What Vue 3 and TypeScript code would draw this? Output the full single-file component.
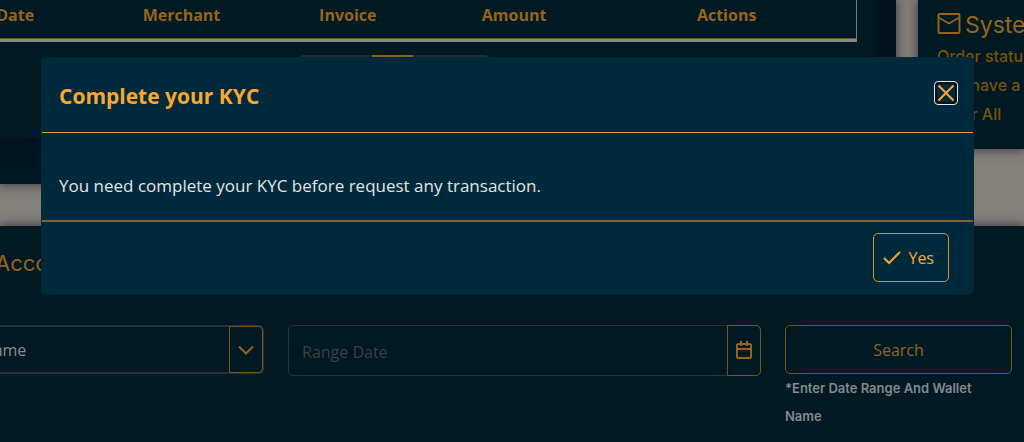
<script setup lang="ts">
import { ref } from 'vue'

const columns = ['Date', 'Merchant', 'Invoice', 'Amount', 'Actions']
const wallet = ref('name')
const range = ref('')
const open = ref(true)
</script>

<template>
  <div class="page">
    <main class="board">
      <div class="top">
        <section class="panel orders">
          <div class="orders-body">
            <table class="table">
              <thead>
                <tr>
                  <th v-for="c in columns" :key="c" scope="col">{{ c }}</th>
                </tr>
              </thead>
            </table>
            <nav class="pager" aria-label="Pages">
              <button type="button" class="pg" aria-label="Previous"></button>
              <button type="button" class="pg on" aria-label="Current"></button>
              <button type="button" class="pg" aria-label="Next"></button>
            </nav>
          </div>
        </section>
        <section class="panel notices">
          <h2 class="notice-title">
            <svg class="mail" viewBox="0 0 24 22" aria-hidden="true">
              <rect x="1" y="1" width="22" height="20" rx="1" />
              <path d="M1.500 5 L12 11 L22.500 5" />
            </svg>
            <span>System</span>
          </h2>
          <p>Order status</p>
          <p>You have a</p>
          <p><a href="#">Clear All</a></p>
        </section>
      </div>

      <section class="panel accounts">
        <h2 class="accounts-title">Accounts</h2>
        <form class="filters" @submit.prevent>
          <div class="field wallet">
            <select v-model="wallet" aria-label="Wallet Name">
              <option value="name">Wallet Name</option>
            </select>
            <button type="button" class="addon" aria-label="Open list">
              <svg class="chevron" viewBox="0 0 16 10" aria-hidden="true"><path d="M1 1.500 L8 8.500 L15 1.500" /></svg>
            </button>
          </div>
          <div class="field range">
            <input v-model="range" type="text" placeholder="Range Date" aria-label="Range Date" />
            <button type="button" class="addon" aria-label="Open calendar">
              <svg class="calendar" viewBox="0 0 16 18" aria-hidden="true">
                <rect x="1" y="3" width="14" height="14" rx="1.500" />
                <path d="M1 8 H15 M5 0 V5 M11 0 V5" />
              </svg>
            </button>
          </div>
          <div class="submit">
            <button type="submit" class="search">Search</button>
            <p class="hint">*Enter Date Range And Wallet Name</p>
          </div>
        </form>
      </section>
    </main>

    <div v-if="open" class="overlay">
      <div class="dialog" role="dialog" aria-modal="true" aria-labelledby="dialog-title">
        <header class="dialog-head">
          <h1 id="dialog-title">Complete your KYC</h1>
          <button type="button" class="close" aria-label="Close" @click="open = false">
            <svg viewBox="0 0 18 18" aria-hidden="true"><path d="M1.500 1.500 L16.500 16.500 M16.500 1.500 L1.500 16.500" /></svg>
          </button>
        </header>
        <p class="dialog-text">You need complete your KYC before request any transaction.</p>
        <footer class="dialog-foot">
          <button type="button" class="yes" @click="open = false">
            <svg viewBox="0 0 18 14" aria-hidden="true"><path d="M1 7 L6 12 L17 1" /></svg>
            <span>Yes</span>
          </button>
        </footer>
      </div>
    </div>
  </div>
</template>

<style>
body {
  margin: 0;
  background: #84817a;
}
</style>

<style scoped>
* {
  box-sizing: border-box;
}
h1, h2, p {
  margin: 0;
}
button, input, select {
  font: inherit;
  color: inherit;
  background: none;
  border: 0;
  padding: 0;
  margin: 0;
  outline: 0;
}
svg {
  display: block;
  fill: none;
  stroke: currentColor;
  stroke-width: 2;
}
.page {
  position: relative;
  min-height: 100vh;
  overflow: hidden;
  font-family: "Open Sans", "Noto Sans", sans-serif;
  color: #95651d;
}
.board {
  display: flex;
  flex-direction: column;
  gap: 42px;
}
.top {
  display: grid;
  grid-template-columns: minmax(0, 1fr) 106px;
  gap: 22px;
  align-items: start;
}
.panel {
  background: #001923;
  box-shadow: 0 0 10px 1px #3a3a42;
}
.orders {
  padding: 0 20px 46px 0;
  background: linear-gradient(#001220 138px, #001923 100%);
}
.orders-body {
  height: 138px;
  padding-right: 19px;
  margin-left: -68px;
  background: #001923;
}
.table {
  width: 100%;
  height: 42px;
  table-layout: fixed;
  border-collapse: separate;
  border-spacing: 0;
  border-right: 1px solid #77797a;
  border-bottom: 3px solid #84878a;
}
.table th {
  width: 18%;
  padding: 0 0 8px;
  font-size: 16px;
  line-height: 24px;
  font-weight: 700;
  border-bottom: 1px solid #76541f;
}
.table th:last-child {
  width: 28%;
}
.pager {
  display: flex;
  justify-content: center;
  padding-top: 13px;
}
.pg {
  width: 72px;
  height: 40px;
  border: 2px solid #252b3b;
  border-radius: 4px 0 0 4px;
}
.pg:last-child {
  width: 76px;
  border-radius: 0 4px 4px 0;
}
.pg.on {
  width: 41px;
  border-color: #85601c;
  border-radius: 0;
}
.notices {
  height: 149px;
  padding: 8px 0 0 19px;
  overflow: hidden;
  white-space: nowrap;
  font-family: Inter, sans-serif;
  font-size: 16px;
  line-height: 29px;
  font-weight: 500;
  color: #755309;
}
.notices a {
  color: inherit;
  text-decoration: none;
}
.notice-title {
  display: flex;
  align-items: center;
  gap: 4px;
  font-size: 23px;
  line-height: 34px;
  font-weight: 400;
  color: #95651d;
}
.mail {
  flex: none;
  width: 24px;
  height: 21px;
  margin-bottom: 4px;
}
.accounts {
  min-height: 215px;
  padding: 20px 12px 12px 0;
  border-bottom: 1px solid #001220;
}
.accounts-title {
  margin-left: -5px;
  font-family: Inter, sans-serif;
  font-size: 22px;
  line-height: 35px;
  font-weight: 400;
}
.filters {
  display: grid;
  grid-template-columns: 351fr 473fr 227fr;
  gap: 24px;
  align-items: start;
  margin: 44px 0 0 -87px;
  font-size: 16px;
}
.field {
  display: flex;
  border: 1px solid #2b303c;
  border-radius: 5px;
}
.field select,
.field input {
  flex: 1;
  min-width: 0;
  padding: 0 13px;
  appearance: none;
}
.field input::placeholder {
  color: #3b3f41;
  opacity: 1;
}
.wallet {
  height: 49px;
  border-width: 2px;
}
.wallet select {
  padding-left: 16px;
  color: #8b8e90;
}
.range {
  height: 51px;
}
.range input {
  padding-top: 3px;
}
.addon {
  display: grid;
  place-items: center;
  flex: none;
  width: 34px;
  margin: -1px;
  border: 1px solid #76541a;
  border-radius: 0 5px 5px 0;
}
.chevron {
  width: 16px;
  height: 10px;
}
.calendar {
  width: 16px;
  height: 18px;
  margin-bottom: 2px;
}
.search {
  display: block;
  width: 100%;
  height: 49px;
  border: 1px solid #76541a;
  border-radius: 5px;
}
.hint {
  max-width: 204px;
  font-family: Inter, sans-serif;
  font-size: 13px;
  line-height: 28px;
  font-weight: 600;
  color: #85898c;
}
.overlay {
  position: absolute;
  inset: 0;
  padding: 57px 50px 0 41px;
}
.dialog {
  background: #00293b;
  border-radius: 5px;
  color: #f8a830;
}
.dialog-head {
  display: flex;
  align-items: center;
  justify-content: space-between;
  margin: 0 1px;
  padding: 22px 15px 18px 17px;
  border-bottom: 1px solid #e39d30;
}
.dialog-head h1 {
  font-size: 21px;
  line-height: 35px;
  font-weight: 700;
}
.close {
  display: grid;
  place-items: center;
  width: 24px;
  height: 24px;
  margin-bottom: 8px;
  border: 1px solid #e4e8ea;
  border-radius: 4px;
  box-shadow: inset 0 0 0 2px #101014;
}
.close svg {
  width: 18px;
  height: 18px;
}
.dialog-text {
  padding: 39px 18px 21px;
  font-size: 17px;
  line-height: 27px;
  color: #e3e6e7;
}
.dialog-foot {
  display: flex;
  justify-content: flex-end;
  margin: 0 1px;
  padding: 11px 24px 13px;
  border-top: 2px solid #7a6636;
}
.yes {
  display: flex;
  align-items: center;
  gap: 7px;
  height: 49px;
  padding: 0 14px 0 9px;
  border: 1px solid #d59330;
  border-radius: 5px;
  font-size: 16px;
}
.yes svg {
  width: 18px;
  height: 14px;
}
</style>
